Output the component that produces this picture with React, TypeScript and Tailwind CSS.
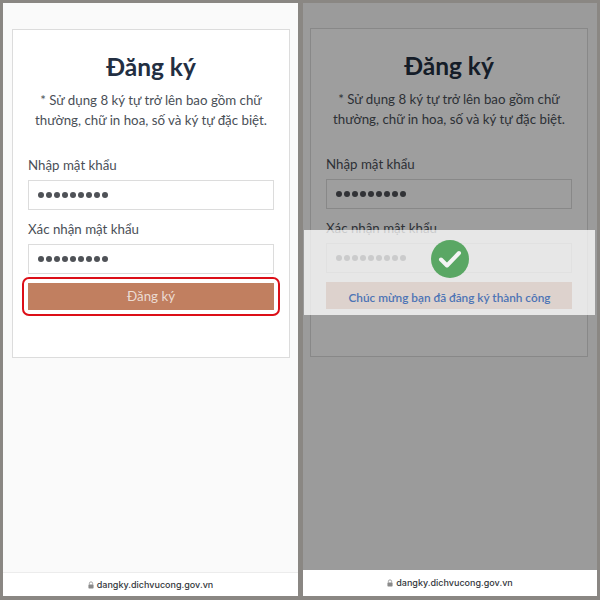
const FormCard = ({ redRing, faint }: { redRing?: boolean; faint?: boolean }) => {
  return (
    <div className="border border-[#dcdcdc] bg-white h-[329px] px-[15px] pt-[20px]">
      <h1 className="text-center text-[24.5px] leading-[34px] font-bold text-[#232f42]">Đăng ký</h1>
      <p className="mt-[6px] text-center text-[13.3px] leading-[20px] whitespace-nowrap text-[#4a4f57]">
        * Sử dụng 8 ký tự trở lên bao gồm chữ
        <br />
        thường, chữ in hoa, số và ký tự đặc biệt.
      </p>
      <label className="block mt-[25px] text-[13.3px] leading-[20px] text-[#4a4f57]">Nhập mật khẩu</label>
      <div className="mt-[5px] h-[30px] border border-[#dcdcdc] bg-white pl-[9px] flex items-center gap-[2px]">
        <Dots />
      </div>
      <label className="block mt-[9px] text-[13.3px] leading-[20px] text-[#4a4f57]">Xác nhận mật khẩu</label>
      <div className="mt-[5px] h-[30px] border border-[#dcdcdc] bg-white pl-[9px] flex items-center gap-[2px]">
        <Dots />
      </div>
      <div className="relative mt-[9px]">
        <button className={faint ? "w-full h-[27px] bg-[#c17f60] text-[13.3px] text-[#c98f74]" : "w-full h-[27px] bg-[#c17f60] text-[13.3px] text-[#ecdcd3]"}>
          Đăng ký
        </button>
        {redRing && (
          <div className="absolute -left-[6px] -right-[6px] -top-[6px] -bottom-[6px] border-[2px] border-[#dc0f18] rounded-[7px]" />
        )}
      </div>
    </div>
  );
};

const Dots = () => {
  return (
    <>
      {[0, 1, 2, 3, 4, 5, 6, 7, 8].map((i) => (
        <span key={i} className="w-[6px] h-[6px] rounded-full bg-[#4f5257]" />
      ))}
    </>
  );
};

const UrlBar = ({ tall }: { tall?: boolean }) => {
  return (
    <div
      className={
        tall
          ? "h-[26px] bg-white flex items-center justify-center gap-[3px] text-[9px] font-medium text-[#33363b] font-['Inter',sans-serif]"
          : "h-[24px] bg-white border-t border-[#ececec] flex items-center justify-center gap-[3px] text-[9px] font-medium text-[#33363b] font-['Inter',sans-serif]"
      }
    >
      <svg width="6" height="8" viewBox="0 0 7 9" fill="none">
        <path d="M1.6 4V2.7a1.9 1.9 0 0 1 3.8 0V4" stroke="#8a8a8a" strokeWidth="0.9" />
        <rect x="0.5" y="3.8" width="6" height="4.7" rx="0.8" fill="#8a8a8a" />
      </svg>
      <span>dangky.dichvucong.gov.vn</span>
    </div>
  );
};

const App = () => {
  return (
    <div className="w-[600px] h-[600px] bg-[#8a8783] flex gap-[5px] p-[3px] font-['Lato',sans-serif]">
      <div className="w-[295px] h-[593px] bg-[#fafafa] flex flex-col">
        <div className="flex-1 pl-[9px] pr-[8px] pt-[26px]">
          <FormCard redRing />
        </div>
        <UrlBar />
      </div>

      <div className="relative w-[294px] h-[593px] bg-[#fafafa] flex flex-col">
        <div className="flex-1 pl-[7px] pr-[9px] pt-[25px]">
          <FormCard faint />
        </div>
        <UrlBar tall />
        <div className="absolute left-0 right-0 top-0 bottom-[26px] bg-black/38" />
        <div className="absolute left-[1px] right-[2px] top-[227px] h-[85px] bg-white/75 flex flex-col items-center">
          <div className="mt-[10px] w-[38px] h-[38px] rounded-full bg-[#5aa764] flex items-center justify-center">
            <svg width="24" height="20" viewBox="0 0 24 20" fill="none">
              <path d="M3 10.5l6 6L21 4" stroke="#f4f4f4" strokeWidth="4" strokeLinecap="round" strokeLinejoin="round" />
            </svg>
          </div>
          <span className="mt-[12px] text-[11.8px] leading-[16px] font-semibold text-[#4d74b5]">
            Chúc mừng bạn đã đăng ký thành công
          </span>
        </div>
      </div>
    </div>
  );
};

export default App;
